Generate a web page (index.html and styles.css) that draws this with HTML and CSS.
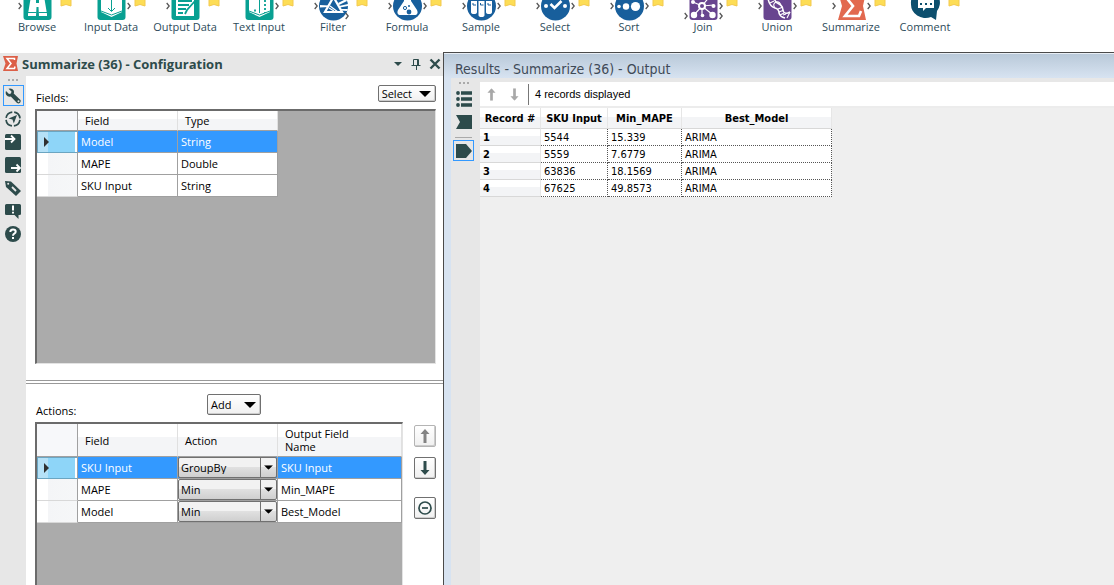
FILE: index.html
```html
<!DOCTYPE html>
<html lang="en">
<head>
    <meta charset="UTF-8">
    <title>Summarize (36) - Configuration</title>
    <link rel="stylesheet" href="styles.css">
</head>
<body>
    <!-- Shared shapes -->
    <svg class="defs" width="0" height="0" aria-hidden="true">
        <symbol id="ribbon" viewBox="0 0 12 7"><path d="M1 -1H11V6L6 4.500L1 6Z" fill="#fddd55" stroke="#f3c94e"/></symbol>
        <symbol id="chevron" viewBox="0 0 4 8"><path d="M.7 1L3.200 4L.7 7" fill="none" stroke="#555" stroke-width="1.300"/></symbol>
        <symbol id="arrow" viewBox="0 0 10 14"><path d="M5 0L9.500 5H6.500V14H3.500V5H.5Z" fill="currentColor"/></symbol>
        <symbol id="down" viewBox="0 0 12 6"><path d="M0 0H12L6 6Z" fill="currentColor"/></symbol>
    </svg>

    <nav class="toolbar">
        <a class="tool" href="#">
            <svg class="tool-icon" viewBox="0 0 74 21">
                <use href="#chevron" x="18" y="2" width="4" height="8"/>
                <rect x="23.500" y="-8" width="28" height="28" rx="3" fill="#08a092"/>
                <path d="M31 -4H36V3H39V-4H44L47 14V16H39L38.500 7H36.500L36 16H28V14Z" fill="#fff"/>
                <path d="M28 12.500H36.500M38.500 12.500H47" stroke="#08a092"/>
                <use href="#ribbon" x="60" width="12" height="7"/>
            </svg>
            <span>Browse</span>
        </a>
        <a class="tool" href="#">
            <svg class="tool-icon" viewBox="0 0 74 21">
                <rect x="23.500" y="-8" width="28" height="28" rx="3" fill="#08a092"/>
                <path d="M27 -4L37.500 0L48 -4V12L37.500 17L27 12Z" fill="#fff"/>
                <path d="M37.500 -2V11M34 8L37.500 11.500L41 8M27 11L37.500 15L48 11" fill="none" stroke="#08a092"/>
                <use href="#chevron" x="53" y="2" width="4" height="8"/>
                <use href="#ribbon" x="60" width="12" height="7"/>
            </svg>
            <span>Input Data</span>
        </a>
        <a class="tool" href="#">
            <svg class="tool-icon" viewBox="0 0 74 21">
                <use href="#chevron" x="18" y="2" width="4" height="8"/>
                <rect x="23.500" y="-8" width="28" height="28" rx="3" fill="#08a092"/>
                <path d="M28 -5H46V16H28Z" fill="#fff"/>
                <path d="M30 1H44M30 5H41M30 9H38M30 13H35M37 14L39 10L47 1" fill="none" stroke="#08a092" stroke-width="1.800"/>
                <use href="#ribbon" x="60" width="12" height="7"/>
            </svg>
            <span>Output Data</span>
        </a>
        <a class="tool" href="#">
            <svg class="tool-icon" viewBox="0 0 74 21">
                <rect x="23.500" y="-8" width="28" height="28" rx="3" fill="#08a092"/>
                <path d="M27 -4L37.500 0L48 -4V12L37.500 17L27 12Z" fill="#fff"/>
                <path d="M37.500 -2V13M27 11L37.500 15L48 11" fill="none" stroke="#08a092"/>
                <path d="M43 0V13M33 9.500V11.500" fill="none" stroke="#08a092" stroke-width="1.800" stroke-dasharray="2 2"/>
                <use href="#chevron" x="53" y="2" width="4" height="8"/>
                <use href="#ribbon" x="60" width="12" height="7"/>
            </svg>
            <span>Text Input</span>
        </a>
        <a class="tool" href="#">
            <svg class="tool-icon" viewBox="0 0 74 21">
                <use href="#chevron" x="18" y="2" width="4" height="8"/>
                <circle cx="37.500" cy="6" r="14.500" fill="#185f9c"/>
                <path d="M24 5L33 5.500V7L24 7.500ZM42 3L50 -1L51 1L43 5ZM43 6L52 4V6L44 7.500ZM44 9L52 9L51 11L45 10.500Z" fill="#fff"/>
                <path d="M37.500 -3L29 12H46Z" fill="#185f9c" stroke="#fff" stroke-width="2.200"/>
                <path d="M34 6L42 12M33 8L38 11" fill="none" stroke="#fff" stroke-width="1.200"/>
                <use href="#chevron" x="49" y="12" width="4" height="8"/>
                <use href="#ribbon" x="60" width="12" height="7"/>
            </svg>
            <span>Filter</span>
        </a>
        <a class="tool" href="#">
            <svg class="tool-icon" viewBox="0 0 74 21">
                <use href="#chevron" x="18" y="2" width="4" height="8"/>
                <circle cx="37.500" cy="6" r="14.500" fill="#185f9c"/>
                <path d="M34 -4H41V1L47 10Q49 15 44 15H31Q26 15 28 10L34 1Z" fill="#fff"/>
                <circle cx="35" cy="8" r="1.600" fill="none" stroke="#185f9c"/>
                <circle cx="39" cy="12" r="2.400" fill="#185f9c"/>
                <circle cx="39" cy="6" r="1" fill="#185f9c"/>
                <use href="#chevron" x="53" y="2" width="4" height="8"/>
                <use href="#ribbon" x="60" width="12" height="7"/>
            </svg>
            <span>Formula</span>
        </a>
        <a class="tool" href="#">
            <svg class="tool-icon" viewBox="0 0 74 21">
                <use href="#chevron" x="18" y="2" width="4" height="8"/>
                <circle cx="37.500" cy="6" r="14.500" fill="#185f9c"/>
                <path d="M27 1H33V12Q33 14 30 14Q27 14 27 12ZM34.500 1H40.500V15Q40.500 17 37.500 17Q34.500 17 34.500 15ZM42 1H48V12Q48 14 45 14Q42 14 42 12Z" fill="#fff"/>
                <path d="M29 3V5H32M36.500 3V5H39.500M44 3V5H47" fill="none" stroke="#185f9c"/>
                <path d="M26 -1H34M34.500 -1H41M42 -1H49" stroke="#fff"/>
                <use href="#chevron" x="53" y="2" width="4" height="8"/>
                <use href="#ribbon" x="60" width="12" height="7"/>
            </svg>
            <span>Sample</span>
        </a>
        <a class="tool" href="#">
            <svg class="tool-icon" viewBox="0 0 74 21">
                <use href="#chevron" x="18" y="2" width="4" height="8"/>
                <circle cx="37.500" cy="6" r="14.500" fill="#185f9c"/>
                <circle cx="28" cy="6" r="2" fill="#fff"/>
                <circle cx="47" cy="6" r="2" fill="#fff"/>
                <path d="M32.500 4L36.500 8L43.500 1" fill="none" stroke="#fff" stroke-width="2.600"/>
                <use href="#chevron" x="53" y="2" width="4" height="8"/>
                <use href="#ribbon" x="60" width="12" height="7"/>
            </svg>
            <span>Select</span>
        </a>
        <a class="tool" href="#">
            <svg class="tool-icon" viewBox="0 0 74 21">
                <use href="#chevron" x="18" y="2" width="4" height="8"/>
                <circle cx="37.500" cy="6" r="14.500" fill="#185f9c"/>
                <circle cx="27" cy="6.500" r="1.800" fill="#fff"/>
                <circle cx="34" cy="6.500" r="3.200" fill="#fff"/>
                <circle cx="43.500" cy="6.500" r="4.600" fill="#fff"/>
                <use href="#chevron" x="53" y="2" width="4" height="8"/>
                <use href="#ribbon" x="60" width="12" height="7"/>
            </svg>
            <span>Sort</span>
        </a>
        <a class="tool" href="#">
            <svg class="tool-icon" viewBox="0 0 74 21">
                <use href="#chevron" x="18" y="12" width="4" height="8"/>
                <rect x="23.500" y="-8" width="28" height="28" rx="3" fill="#68458f"/>
                <path d="M27 2L36 6L48 5M28 15L36 6L47 15M36 6V15M36 6L44 -4" fill="none" stroke="#fff" stroke-width="1.200"/>
                <circle cx="36" cy="6" r="3" fill="#68458f" stroke="#fff" stroke-width="2"/>
                <circle cx="28" cy="15" r="3.200" fill="#fff"/>
                <circle cx="46.500" cy="15" r="3.200" fill="#fff"/>
                <circle cx="36.500" cy="15.500" r="1.800" fill="#fff"/>
                <circle cx="27" cy="2" r="2" fill="#fff"/>
                <circle cx="47.500" cy="6" r="2" fill="#fff"/>
                <use href="#chevron" x="53" y="2" width="4" height="8"/>
                <use href="#chevron" x="53" y="12" width="4" height="8"/>
                <use href="#ribbon" x="60" width="12" height="7"/>
            </svg>
            <span>Join</span>
        </a>
        <a class="tool" href="#">
            <svg class="tool-icon" viewBox="0 0 74 21">
                <use href="#chevron" x="18" y="2" width="4" height="8"/>
                <rect x="23.500" y="-8" width="28" height="28" rx="3" fill="#68458f"/>
                <path d="M28 -2Q29 6 35 8Q39 9 39 13Q40 17 45 18M34 -4Q34 2 39 4Q43 6 43 11Q45 15 50 12" fill="none" stroke="#fff" stroke-width="1.500"/>
                <path d="M35 8Q32 4 36 2Q40 1 41 6M38 9L43 7M39 12L44 10M40 15L44 13M47 18L50 12M30 3L34 1M43 15L46 14" fill="none" stroke="#fff" stroke-width="1.100"/>
                <use href="#chevron" x="53" y="2" width="4" height="8"/>
                <use href="#ribbon" x="60" width="12" height="7"/>
            </svg>
            <span>Union</span>
        </a>
        <a class="tool" href="#">
            <svg class="tool-icon" viewBox="0 0 74 21">
                <use href="#chevron" x="18" y="2" width="4" height="8"/>
                <path d="M24 -8H52L49 6L52 20H24L28 6Z" fill="#e2694f"/>
                <path d="M45 -1V-4H31L39 6L31 16H45L47 11" fill="none" stroke="#fff" stroke-width="2.600"/>
                <use href="#chevron" x="53" y="2" width="4" height="8"/>
                <use href="#ribbon" x="60" width="12" height="7"/>
            </svg>
            <span>Summarize</span>
        </a>
        <a class="tool" href="#">
            <svg class="tool-icon" viewBox="0 0 74 21">
                <path d="M23 4A14.500 14 0 1 1 49 11L48 20L43 17A14.500 13.500 0 0 1 23 4Z" fill="#0d4f6e"/>
                <path d="M30 -3H46V8H38L35 11V8H30Z" fill="#fff"/>
                <path d="M32 4H34M37 4H39M42 4H44" stroke="#0d4f6e" stroke-width="2"/>
                <use href="#ribbon" x="60" width="12" height="7"/>
            </svg>
            <span>Comment</span>
        </a>
    </nav>

    <main class="workspace">
        <section class="config">
            <header class="config-header">
                <svg class="sigma" viewBox="0 0 15 15"><path d="M0 0H15L13.500 7.500L15 15H0L2.500 7.500Z" fill="#dc5f47"/><path d="M11.500 4V2.500H4L8 7.500L4 12.500H11.500L12 10.500" fill="none" stroke="#fff" stroke-width="1.500"/></svg>
                <h1>Summarize (36) - Configuration</h1>
                <button class="icon-btn" aria-label="Menu"><svg width="8" height="4" viewBox="0 0 12 6"><use href="#down"/></svg></button>
                <button class="icon-btn" aria-label="Pin"><svg width="10" height="12" viewBox="0 0 10 12"><path d="M2.500 7V1.500H7.500V7M6.500 1V7M0.500 7.500H9.500M5.500 8V12" fill="none" stroke="currentColor"/></svg></button>
                <button class="icon-btn" aria-label="Close"><svg width="12" height="12" viewBox="0 0 12 12"><path d="M1.500 1.500L10.500 10.500M10.500 1.500L1.500 10.500" stroke="currentColor" stroke-width="2.400"/></svg></button>
            </header>

            <div class="config-body">
                <nav class="side-tabs">
                    <span class="grip"></span>
                    <button class="tab active" aria-label="Configuration"><svg viewBox="0 0 16 16"><path d="M1 3L4 6L6 5.500L6.500 3.500L3.500 .7Q7 -.3 8.700 2.500Q9.300 4 8.700 5.500L15.500 12Q16 13.500 15 14.700Q13.700 16 12 15L5.800 8.500Q3 9.300 1.300 7Q.2 5 1 3Z" fill="#2d4b4b"/><circle cx="13.500" cy="13.300" r="1" fill="#e8e8e8"/></svg></button>
                    <button class="tab" aria-label="Navigation"><svg viewBox="0 0 16 16"><circle cx="8" cy="8" r="7" fill="none" stroke="#2d4b4b" stroke-width="1.700" stroke-dasharray="9 2" stroke-dashoffset="-1"/><path d="M12 4L8.800 12.500L7.500 8.500L3.500 7.400Z" fill="#2d4b4b"/></svg></button>
                    <button class="tab" aria-label="Input"><svg viewBox="0 0 16 16"><rect y="0" width="16" height="16" rx="1.500" fill="#2d4b4b"/><path d="M0 5H8M6 1.500L9.500 5L6 8.500" fill="none" stroke="#fff" stroke-width="1.800"/></svg></button>
                    <button class="tab" aria-label="Output"><svg viewBox="0 0 16 16"><rect y="0" width="16" height="16" rx="1.500" fill="#2d4b4b"/><path d="M6 11H14M11.500 7.500L15 11L11.500 14.500" fill="none" stroke="#fff" stroke-width="1.800"/></svg></button>
                    <button class="tab" aria-label="Annotation"><svg viewBox="0 0 16 16"><path d="M0 1L6 1.500L16 11L11 16L1 7Z" fill="#2d4b4b"/><circle cx="3.200" cy="3.800" r="1" fill="#e8e8e8"/><path d="M7 7L11 11" stroke="#e8e8e8" stroke-width="1.800"/></svg></button>
                    <button class="tab" aria-label="Messages"><svg viewBox="0 0 16 16"><path d="M1.500 1H14.500Q16 1 16 2.500V11Q16 12 14.500 12H13.500V16L9.500 12H1.500Q0 12 0 11V2.500Q0 1 1.500 1Z" fill="#2d4b4b"/><path d="M8 2.500V7.500M8 8.800V10.500" stroke="#fff" stroke-width="2"/></svg></button>
                    <button class="tab" aria-label="Help"><svg viewBox="0 0 16 16"><circle cx="8" cy="8" r="8" fill="#2d4b4b"/><path d="M5.300 6Q5.300 3.500 8 3.500Q10.700 3.500 10.700 5.800Q10.700 7 9.300 7.700Q8 8.400 8 9.800M8 11V13" fill="none" stroke="#fff" stroke-width="2"/></svg></button>
                </nav>

                <div class="panes">
                    <div class="pane fields-pane">
                        <div class="pane-top">
                            <span class="pane-label" id="fieldsLabel">Fields:</span>
                            <button class="menu-btn">Select <svg width="12" height="6" viewBox="0 0 12 6"><use href="#down"/></svg></button>
                        </div>
                        <div class="grid-box">
                            <table class="grid fields-grid" aria-labelledby="fieldsLabel">
                                <thead>
                                    <tr><th class="row-head"></th><th>Field</th><th>Type</th></tr>
                                </thead>
                                <tbody>
                                    <tr class="selected"><td class="row-head"><span class="marker"></span></td><td>Model</td><td>String</td></tr>
                                    <tr><td class="row-head"></td><td>MAPE</td><td>Double</td></tr>
                                    <tr><td class="row-head"></td><td>SKU Input</td><td>String</td></tr>
                                </tbody>
                            </table>
                        </div>
                    </div>

                    <div class="pane actions-pane">
                        <div class="pane-top">
                            <span class="pane-label" id="actionsLabel">Actions:</span>
                            <button class="menu-btn add-btn">Add <svg width="12" height="6" viewBox="0 0 12 6"><use href="#down"/></svg></button>
                        </div>
                        <div class="actions-row">
                            <div class="grid-box">
                                <table class="grid actions-grid" aria-labelledby="actionsLabel">
                                    <thead>
                                        <tr><th class="row-head"></th><th>Field</th><th>Action</th><th class="output-col">Output Field Name</th></tr>
                                    </thead>
                                    <tbody>
                                        <tr class="selected">
                                            <td class="row-head"><span class="marker"></span></td>
                                            <td>SKU Input</td>
                                            <td class="combo-cell"><div class="combo"><select aria-label="Action for SKU Input"><option>GroupBy</option><option>Min</option></select><svg viewBox="0 0 12 6"><use href="#down"/></svg></div></td>
                                            <td>SKU Input</td>
                                        </tr>
                                        <tr>
                                            <td class="row-head"></td>
                                            <td>MAPE</td>
                                            <td class="combo-cell"><div class="combo"><select aria-label="Action for MAPE"><option>Min</option><option>GroupBy</option></select><svg viewBox="0 0 12 6"><use href="#down"/></svg></div></td>
                                            <td>Min_MAPE</td>
                                        </tr>
                                        <tr>
                                            <td class="row-head"></td>
                                            <td>Model</td>
                                            <td class="combo-cell"><div class="combo"><select aria-label="Action for Model"><option>Min</option><option>GroupBy</option></select><svg viewBox="0 0 12 6"><use href="#down"/></svg></div></td>
                                            <td>Best_Model</td>
                                        </tr>
                                    </tbody>
                                </table>
                            </div>
                            <div class="order-btns">
                                <button class="square-btn" aria-label="Move up" disabled><svg width="10" height="14"><use href="#arrow"/></svg></button>
                                <button class="square-btn" aria-label="Move down"><svg class="flip" width="10" height="14"><use href="#arrow"/></svg></button>
                                <button class="square-btn remove-btn" aria-label="Remove"><svg width="14" height="14" viewBox="0 0 14 14"><circle cx="7" cy="7" r="6" fill="none" stroke="currentColor" stroke-width="1.700"/><path d="M4 7H10" stroke="currentColor" stroke-width="1.700"/></svg></button>
                            </div>
                        </div>
                    </div>
                </div>
            </div>
        </section>

        <section class="results">
            <h2 class="results-title">Results - Summarize (36) - Output</h2>
            <div class="results-body">
                <nav class="results-side">
                    <span class="grip"></span>
                    <button class="tab" aria-label="Messages"><svg viewBox="0 0 16 16"><path d="M5 2H16M5 8H16M5 14H16" stroke="#2d4b4b" stroke-width="3.400"/><circle cx="2" cy="2" r="1.900" fill="#2d4b4b"/><circle cx="2" cy="8" r="1.900" fill="#2d4b4b"/><circle cx="2" cy="14" r="1.900" fill="#2d4b4b"/></svg></button>
                    <button class="tab" aria-label="Input anchor"><svg viewBox="0 0 16 16"><path d="M0 1H16V15H0L4 8Z" fill="#2d4b4b"/></svg></button>
                    <span class="divider"></span>
                    <button class="tab active" aria-label="Output anchor"><svg viewBox="0 0 16 16"><path d="M0 1H10L16 8L10 15H0Z" fill="#2d4b4b"/></svg></button>
                </nav>
                <div class="results-main">
                    <div class="results-toolbar">
                        <button class="nav-btn" aria-label="Previous" disabled><svg width="9" height="13" viewBox="0 0 10 14"><use href="#arrow"/></svg></button>
                        <button class="nav-btn" aria-label="Next" disabled><svg class="flip" width="9" height="13" viewBox="0 0 10 14"><use href="#arrow"/></svg></button>
                        <span class="record-count">4 records displayed</span>
                    </div>
                    <table class="records">
                        <colgroup><col class="c-record"><col class="c-sku"><col class="c-mape"><col class="c-model"></colgroup>
                        <thead>
                            <tr><th>Record #</th><th>SKU Input</th><th>Min_MAPE</th><th>Best_Model</th></tr>
                        </thead>
                        <tbody>
                            <tr><th>1</th><td>5544</td><td>15.339</td><td>ARIMA</td></tr>
                            <tr><th>2</th><td>5559</td><td>7.6779</td><td>ARIMA</td></tr>
                            <tr><th>3</th><td>63836</td><td>18.1569</td><td>ARIMA</td></tr>
                            <tr><th>4</th><td>67625</td><td>49.8573</td><td>ARIMA</td></tr>
                        </tbody>
                    </table>
                </div>
            </div>
        </section>
    </main>
</body>
</html>
```
FILE: styles.css
```css
/* Base styles */
* {
    box-sizing: border-box;
}
body {
    margin: 0;
    height: 100vh;
    display: flex;
    flex-direction: column;
    overflow: hidden;
    background: #fff;
    color: #000;
    font-family: "Open Sans", "Noto Sans", sans-serif;
    font-size: 11px;
    line-height: 16px;
}
button {
    font: inherit;
    color: inherit;
    padding: 0;
    border: 0;
    background: none;
    display: flex;
    align-items: center;
    justify-content: center;
}
svg {
    display: block;
    flex: none;
}
.defs {
    position: absolute;
}
.flip {
    transform: rotate(180deg);
}

/* Tool palette */
.toolbar {
    display: flex;
    flex: none;
    height: 52px;
}
.tool {
    width: 74px;
    flex: none;
    text-align: center;
    text-decoration: none;
    color: #2d4b5a;
    white-space: nowrap;
}
.tool-icon {
    width: 74px;
    height: 21px;
    margin-bottom: -2px;
}

.workspace {
    flex: 1;
    display: flex;
    min-height: 0;
}

/* Configuration window */
.config {
    width: 443px;
    flex: none;
    display: flex;
    flex-direction: column;
    padding-top: 1px;
}
.config-header {
    height: 23px;
    flex: none;
    display: flex;
    align-items: center;
    gap: 8px;
    padding: 0 2px 2px 3px;
    background: #e7e7e7;
    color: #2d4b4b;
}
.config-header h1 {
    flex: 1;
    margin: 0 0 0 -4px;
    font-size: 13px;
    font-weight: bold;
    white-space: nowrap;
}
.sigma {
    width: 15px;
    height: 15px;
}
.icon-btn {
    min-width: 10px;
    height: 16px;
}
.config-body {
    flex: 1;
    display: flex;
    min-height: 0;
}
.side-tabs,
.results-side {
    flex: none;
    display: flex;
    flex-direction: column;
    align-items: center;
    background: #e7e7e7;
}
.side-tabs {
    width: 26px;
    gap: 2px;
}
.grip {
    width: 10px;
    height: 2px;
    background: repeating-linear-gradient(90deg, #aaa 0, #aaa 2px, transparent 2px, transparent 4px);
}
.side-tabs .grip {
    margin: 3px 0 2px;
}
.tab {
    width: 21px;
    height: 21px;
    flex: none;
    border: 1px solid transparent;
}
.tab svg {
    width: 16px;
    height: 16px;
}
.tab.active {
    border-color: #3399ff;
}
.panes {
    flex: 1;
    display: flex;
    flex-direction: column;
    min-width: 0;
}
.pane {
    display: flex;
    flex-direction: column;
    padding: 0 7px 0 9px;
}
.fields-pane {
    height: 308px;
    flex: none;
    padding-top: 9px;
    padding-bottom: 16px;
    border-bottom: 4px double #999;
}
.actions-pane {
    flex: 1;
    min-height: 0;
    padding-top: 10px;
}
.pane-top {
    display: flex;
    align-items: flex-start;
    flex: none;
    height: 24px;
}
.pane-label {
    padding-left: 1px;
    margin-top: 5px;
}
.fields-pane .pane-label {
    flex: 1;
}
.actions-pane .pane-top {
    height: 28px;
}
.actions-pane .pane-label {
    width: 172px;
    margin-top: 9px;
}
.menu-btn {
    height: 17px;
    gap: 7px;
    padding: 0 4px 0 3px;
    border: 1px solid #707070;
    border-radius: 2px;
    background: linear-gradient(#fff, #f0f0f0);
    box-shadow: inset -1px -1px #ccc;
}
.add-btn {
    height: 21px;
    gap: 13px;
}

/* Data grids */
.grid-box {
    flex: 1;
    min-width: 0;
    background: #ababab;
    border: 2px solid #6b6b6b;
    border-right: 1px solid #e3e3e3;
    border-bottom: 1px solid #e3e3e3;
    overflow: hidden;
}
.grid {
    border-collapse: separate;
    border-spacing: 0;
    table-layout: fixed;
}
.fields-grid {
    width: 241px;
}
.actions-grid {
    width: 100%;
}
.grid th,
.grid td {
    width: 100px;
    height: 22px;
    padding: 0 3px;
    border-right: 1px solid #a0a0a0;
    border-bottom: 1px solid #a0a0a0;
    background: #fff;
    text-align: left;
    font-weight: normal;
    line-height: 13px;
}
.grid thead th {
    height: 20px;
    padding-left: 7px;
    border-right-color: #e0e0e0;
    background: linear-gradient(#fff 40%, #f4f5f7 40%, #f4f5f7);
}
.actions-grid thead th {
    height: 33px;
}
.actions-grid .output-col {
    width: auto;
    padding-right: 40px;
}
.grid .row-head,
.grid thead .row-head {
    width: 41px;
    padding: 0 0 0 7px;
    border-right-color: #a0a0a0;
}
.grid tbody .row-head {
    border-bottom-color: #d8d8d8;
    background: linear-gradient(90deg, #fff 11px, #f4f5f7 11px, #f6f7f8);
}
.grid thead .row-head {
    background: #f7f8fa;
}
.grid .selected td {
    background: #3399ff;
    color: #fff;
}
.grid tbody .selected .row-head {
    background: linear-gradient(90deg, #b5e1f7 11px, #8ed5f8 11px);
    border-bottom-color: #6ba5c1;
    box-shadow: inset 1px 1px #6ba5c1, inset -2px 0 #fff;
}
.marker {
    display: block;
    width: 0;
    height: 0;
    border: 5px solid transparent;
    border-left-color: #303030;
    border-right: 0;
}
.grid .combo-cell {
    padding: 0;
}
.combo {
    position: relative;
    height: 21px;
    color: #000;
}
.combo select {
    appearance: none;
    width: 100%;
    height: 100%;
    display: block;
    padding: 0 18px 0 2px;
    border: 1px solid #707070;
    border-radius: 2px;
    background: linear-gradient(#f2f2f2 45%, #e0e0e0 50%, #cfcfcf);
    font: inherit;
    color: inherit;
}
.combo svg {
    position: absolute;
    top: 1px;
    right: 1px;
    width: 16px;
    height: 19px;
    padding: 0 3px;
    border-left: 1px solid #707070;
    pointer-events: none;
}
.actions-row {
    flex: 1;
    display: flex;
    gap: 11px;
    min-height: 0;
}
.actions-row .grid-box {
    border-bottom: 0;
}
.order-btns {
    flex: none;
    padding-top: 3px;
}
.square-btn {
    width: 22px;
    height: 22px;
    margin-bottom: 10px;
    border: 1px solid #707070;
    border-radius: 2px;
    background: linear-gradient(#fff, #f0f0f0);
    box-shadow: inset -1px -1px #ccc;
    color: #2d4b4b;
}
.square-btn:disabled {
    border-color: #b4b4b4;
    color: #838383;
}
.remove-btn {
    margin-top: 18px;
}

/* Results window */
.results {
    flex: 1;
    min-width: 0;
    display: flex;
    flex-direction: column;
    border-top: 1px solid #4a4a4a;
    border-left: 1px solid #4a4a4a;
    background: #d7e3f1;
}
.results-title {
    flex: none;
    height: 25px;
    margin: 0;
    padding: 1px 11px 0;
    border-top: 1px solid #e8eef5;
    background: linear-gradient(#b9c9d9, #d7e3f1);
    color: #3f4a57;
    font: normal 14px/28px "DejaVu Sans Condensed", "DejaVu Sans", sans-serif;
    white-space: nowrap;
}
.results-body {
    flex: 1;
    display: flex;
    margin-left: 7px;
    border-top: 4px solid #e7e7e7;
    background: #efefef;
}
.results-side {
    width: 29px;
    padding: 0 4px 0 0;
}
.results-side .grip {
    margin: 0 0 4px;
}
.results-side .tab {
    margin-bottom: 2px;
}
.divider {
    width: 17px;
    height: 1px;
    margin: 3px 0 2px;
    background: #aaa;
}
.results-main {
    flex: 1;
    min-width: 0;
}
.results-toolbar {
    height: 26px;
    display: flex;
    align-items: center;
    gap: 14px;
    padding-left: 7px;
    background: #fff;
    border-bottom: 2px solid #ececec;
}
.nav-btn:disabled {
    color: #a8a8a8;
}
.record-count {
    height: 21px;
    margin-left: -5px;
    padding-left: 6px;
    border-left: 1px solid #777;
    font: 11px/20px "Liberation Sans", Arial, sans-serif;
}
.records {
    width: 352px;
    border-collapse: separate;
    border-spacing: 0;
    table-layout: fixed;
    font: 11px/14px "DejaVu Sans Condensed", "DejaVu Sans", sans-serif;
}
.c-record {
    width: 61px;
}
.c-sku {
    width: 67px;
}
.c-mape {
    width: 74px;
}
.records th,
.records td {
    height: 17px;
    padding: 2px 3px 0;
    white-space: nowrap;
}
.records td {
    background: #fff;
    border-right: 1px dotted #555;
    border-bottom: 1px dotted #555;
}
.records th {
    background: linear-gradient(#fff 45%, #f3f4f6 45%);
    border-right: 1px solid #e6e6e6;
    border-bottom: 1px solid #d8d8d8;
}
.records thead th {
    height: 21px;
}
.records tbody th {
    text-align: left;
}
```
